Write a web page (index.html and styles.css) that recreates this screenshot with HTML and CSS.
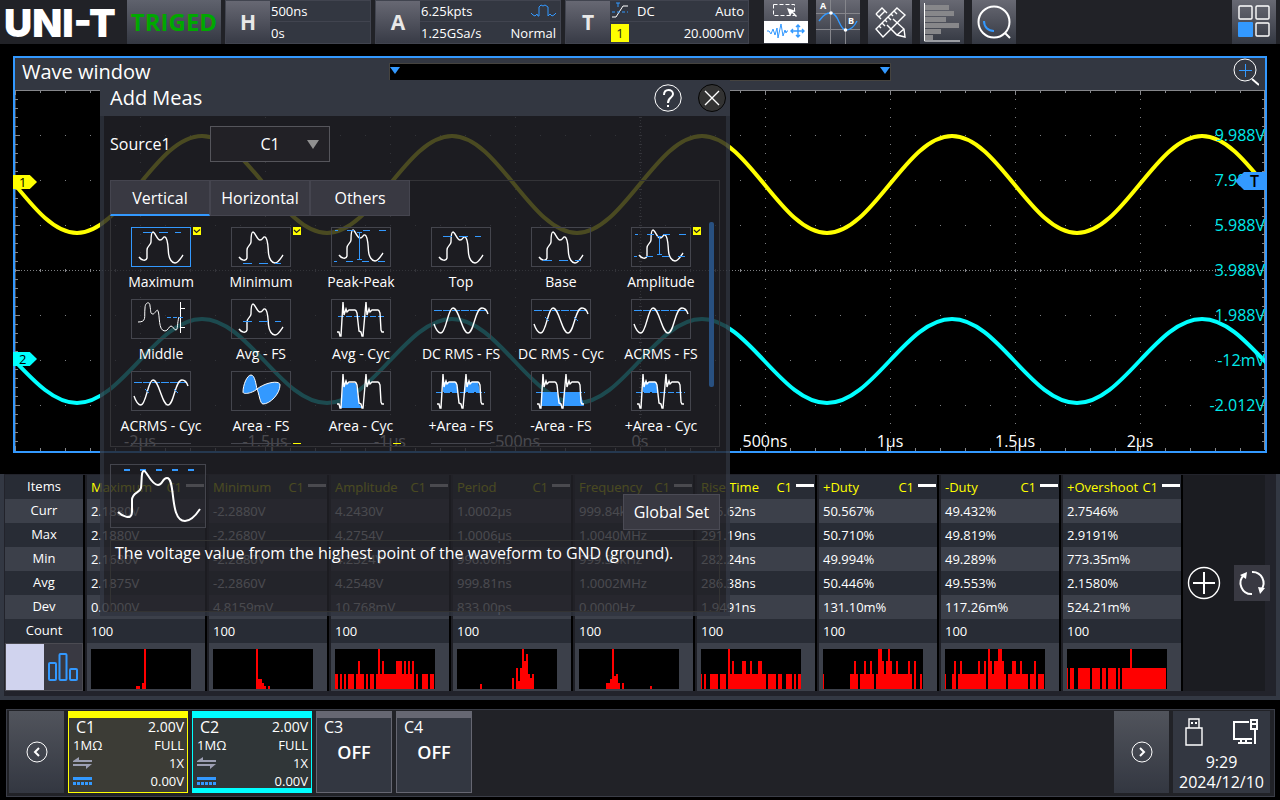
FILE: index.html
```
<!DOCTYPE html>
<html lang="en">

<head>
    <meta charset="UTF-8" />
    <title>UNI-T</title>
    <link rel="stylesheet" href="styles.css">
</head>

<body>
    <!-- shared waveform shapes -->
    <svg class="defs" aria-hidden="true">
        <symbol id="wave" viewBox="0 0 60 40">
            <path class="w" d="M8 30C10 33 15 35 16 31V23C16 19 20 18 20 15C20 8 21 5 22 5C24 5 26 13 29 13C32 13 32 9 34 10C37 11 37 20 37.5 26C38 32 41 36 44 36C47 36 50 31 52 28" />
        </symbol>
        <symbol id="cyc" viewBox="0 0 60 40">
            <path class="w" d="M6 33H8L9 37H10L12 3L13 16L15 10L16 13L18 11H24Q25 11 26 14L28 32L30 33L31 37H32L35 3L36 16L38 10L39 13L41 11H47Q48 11 49 14L50 31L51 33H53" />
        </symbol>
        <symbol id="sine" viewBox="0 0 60 40">
            <path class="w" d="M3 25C5 31 7 34 10 34C15 34 17 9 22 9C28 9 31 34 37 34C43 34 44 9 51 9C54 9 56 12 57 15" />
        </symbol>
        <symbol id="check" viewBox="0 0 8 8">
            <path fill="#ff0" d="M0 0h8v8H0z" />
            <path fill="none" stroke="#222" stroke-width="1.2" d="M1 3L3.5 5.5L7 2.5" />
        </symbol>
    </svg>

    <header class="topbar">
        <div class="logo">UNI-T</div>
        <div class="status">TRIGED</div>
        <button class="group group-h" type="button">
            <b>H</b>
            <span class="cells"><span class="line"><span>500ns</span></span><span class="line"><span>0s</span></span></span>
        </button>
        <button class="group group-a" type="button">
            <b>A</b>
            <span class="cells">
                <span class="line"><span>6.25kpts</span>
                    <svg width="25" height="14" viewBox="0 0 25 14"><path class="b" d="M0 9l2 2 2 1 2-2 1 2h1V3l2-2 2 1 2-1 3 2v9l2-2 2 2 2-1 2-2" /></svg>
                </span>
                <span class="line"><span>1.25GSa/s</span><span>Normal</span></span>
            </span>
        </button>
        <button class="group group-t" type="button">
            <b>T</b>
            <span class="cells">
                <span class="line">
                    <svg width="18" height="18" viewBox="0 0 18 18"><path class="w" d="M1 15h4L12 4h5" /><path class="b" d="M1 10h16" stroke-dasharray="3 2" /><path class="b" d="M5 1h4M7 1v4" /></svg>
                    <span class="grow">DC</span><span>Auto</span>
                </span>
                <span class="line"><span class="chan">1</span><span>20.000mV</span></span>
            </span>
        </button>
        <nav class="tools">
            <button class="tool split" type="button" aria-label="Select area">
                <svg width="44" height="44" viewBox="0 0 44 44">
                    <path fill="#fff" d="M0 21h44v22H0z" />
                    <path class="w" d="M9.500 4.500h21v11h-21z" stroke-dasharray="4 2" />
                    <path fill="#fff" d="M23 8l9 3-3 1 4 4-1 1-4-4-2 3z" />
                    <path class="b" d="M3 31h2l2 3 2-5 2 6 2-7 1 10 3-14 2 12 2-6 1 3 1-2h1" />
                    <path class="b bold" d="M28 31h12M34 25v12M29 29l-2 2 2 2M38 29l2 2-2 2M32 27l2-2 2 2M32 35l2 2 2-2" />
                </svg>
            </button>
            <button class="tool" type="button" aria-label="Cursor">
                <svg width="44" height="44" viewBox="0 0 44 44">
                    <path stroke="#85868c" d="M14.500 0v44M29.500 0v44M0 13.500h44M0 29.500h44" />
                    <path class="b bold" d="M3 21C8 14 11 13 15 13C23 13 23 30 30 30C35 30 38 27 41 21" />
                    <circle cx="15" cy="13" r="1.800" fill="#fff" /><circle cx="29.500" cy="30" r="1.800" fill="#fff" />
                    <text x="4" y="9" class="tiny">A</text><text x="32" y="24" class="tiny">B</text>
                </svg>
            </button>
            <button class="tool" type="button" aria-label="Measure">
                <svg width="44" height="44" viewBox="0 0 44 44">
                    <g class="w bold">
                        <path d="M8 14L14 8L19 13M25 19L36 29L37 37L29 35L19 25M13 19L8 14M11 17L17 11M29 35L36 29" />
                        <path d="M29 8L37 15L15 37L8 29zM26 11l3 3M23 14l2 2M20 17l3 3M17 20l2 2M14 23l3 3M11 26l2 2" />
                    </g>
                </svg>
            </button>
            <button class="tool" type="button" aria-label="Statistics">
                <svg width="44" height="44" viewBox="0 0 44 44">
                    <path fill="#87878a" d="M5 5h24v5H5zM5 11h29v5H5zM5 17h21v5H5zM5 23h34v5H5zM5 29h16v5H5zM5 35h8v5H5z" />
                    <path class="w" d="M4.500 3v38H40" />
                </svg>
            </button>
            <button class="tool" type="button" aria-label="Search">
                <svg width="44" height="44" viewBox="0 0 44 44">
                    <circle class="w thick" cx="22" cy="22" r="15.500" /><path class="w thick" d="M33 33l5 5" />
                    <path class="b thick" d="M12 21C12 27 16 31 22 31" />
                </svg>
            </button>
        </nav>
        <button class="tool" type="button" aria-label="Menu">
            <svg width="44" height="44" viewBox="0 0 44 44">
                <g class="w bold"><rect x="7" y="6" width="13" height="13" rx="1" /><rect x="24" y="6" width="13" height="13" rx="1" /><rect x="24" y="23" width="13" height="13" rx="1" /></g>
                <rect x="6" y="22" width="15" height="15" rx="1" fill="#39f" />
            </svg>
        </button>
    </header>

    <main class="wave-window">
        <div class="wave-head">
            <h1>Wave window</h1>
            <div class="navigator">
                <svg width="10" height="7" viewBox="0 0 10 7"><path fill="#39f" d="M0 0h10L5 7z" /></svg>
                <svg width="10" height="7" viewBox="0 0 10 7"><path fill="#39f" d="M0 0h10L5 7z" /></svg>
            </div>
            <button class="plain zoom" type="button" aria-label="Zoom">
                <svg width="26" height="28" viewBox="0 0 26 28"><circle class="w" cx="12" cy="12" r="11" /><path class="w thick" d="M19 21l7 6" /><path class="b" d="M12.500 6v13M6 12.500h13" /></svg>
            </button>
        </div>
        <div class="plot">
            <svg class="graph" viewBox="0 0 1250 361" preserveAspectRatio="none">
                <g class="dots">
                    <path stroke-dasharray="1 8" d="M125.500 0v360M250.500 0v360M375.500 0v360M500.500 0v360M750.500 0v360M875.500 0v360M1000.500 0v360M1125.500 0v360" />
                    <path stroke-dasharray="1 24" d="M0 45.500h1250M0 90.500h1250M0 135.500h1250M0 225.500h1250M0 270.500h1250M0 315.500h1250" />
                    <path stroke-dasharray="1 2" d="M0 180.500h1250M625.500 0v360" />
                </g>
                <g class="ticks">
                    <path d="M0 .5h1250M0 0v360M1249.500 0v360" />
                    <path stroke-width="3" stroke-dasharray="1 24" d="M0 1.500h1250M0 359.500h1250M0 180.500h1250" />
                    <path stroke-width="5" stroke-dasharray="1 124" d="M0 2.500h1250M0 358.500h1250" />
                    <path stroke-width="3" stroke-dasharray="1 8" d="M1.500 0v360M1248.500 0v360M625.500 0v360" />
                    <path stroke-width="5" stroke-dasharray="1 44" d="M2.500 0v360M1247.500 0v360" />
                </g>
                <path class="trace c1" d="M-63 46C-17 46 17 143 62 143S141 46 187 46S266 143 312 143S391 46 437 46S516 143 562 143S641 46 687 46S766 143 812 143S891 46 937 46S1016 143 1062 143S1141 46 1187 46S1266 143 1312 143" />
                <path class="trace c2" d="M-63 229C-17 229 17 313 62 313S141 229 187 229S266 313 312 313S391 229 437 229S516 313 562 313S641 229 687 229S766 313 812 313S891 229 937 229S1016 313 1062 313S1141 229 1187 229S1266 313 1312 313" />
            </svg>
            <div class="volts">
                <span>9.988V</span><span>7.988V</span><span>5.988V</span><span>3.988V</span><span>1.988V</span><span>-12mV</span><span>-2.012V</span>
            </div>
            <div class="times">
                <span>-2µs</span><span>-1.5µs</span><span>-1µs</span><span>-500ns</span><span>0s</span><span>500ns</span><span>1µs</span><span>1.5µs</span><span>2µs</span>
            </div>
            <span class="marker m1">1</span>
            <span class="marker m2">2</span>
            <span class="marker mt">T</span>
        </div>
    </main>

    <section class="stats">
        <table>
            <tr>
                <th>Items</th>
                <th><span class="item">Maximum<i>C1</i></span></th>
                <th><span class="item">Minimum<i>C1</i></span></th>
                <th><span class="item">Amplitude<i>C1</i></span></th>
                <th><span class="item">Period<i>C1</i></span></th>
                <th><span class="item">Frequency<i>C1</i></span></th>
                <th><span class="item">Rise Time<i>C1</i></span></th>
                <th><span class="item">+Duty<i>C1</i></span></th>
                <th><span class="item">-Duty<i>C1</i></span></th>
                <th><span class="item">+Overshoot<i>C1</i></span></th>
            </tr>
            <tr><th>Curr</th><td>2.1880V</td><td>-2.2880V</td><td>4.2430V</td><td>1.0002µs</td><td>999.84kHz</td><td>286.62ns</td><td>50.567%</td><td>49.432%</td><td>2.7546%</td></tr>
            <tr><th>Max</th><td>2.1880V</td><td>-2.2680V</td><td>4.2754V</td><td>1.0006µs</td><td>1.0040MHz</td><td>291.19ns</td><td>50.710%</td><td>49.819%</td><td>2.9191%</td></tr>
            <tr><th>Min</th><td>2.1680V</td><td>-2.2880V</td><td>4.2324V</td><td>996.00ns</td><td>999.36kHz</td><td>282.24ns</td><td>49.994%</td><td>49.289%</td><td>773.35m%</td></tr>
            <tr><th>Avg</th><td>2.1875V</td><td>-2.2860V</td><td>4.2548V</td><td>999.81ns</td><td>1.0002MHz</td><td>286.38ns</td><td>50.446%</td><td>49.553%</td><td>2.1580%</td></tr>
            <tr><th>Dev</th><td>0.0000V</td><td>4.8159mV</td><td>10.768mV</td><td>833.00ps</td><td>0.0000Hz</td><td>1.9491ns</td><td>131.10m%</td><td>117.26m%</td><td>524.21m%</td></tr>
            <tr><th>Count</th><td>100</td><td>100</td><td>100</td><td>100</td><td>100</td><td>100</td><td>100</td><td>100</td><td>100</td></tr>
            <tr class="hists">
                <th>
                    <button class="toggle" type="button" aria-label="Histogram">
                        <svg width="30" height="28" viewBox="0 0 30 28"><g class="b thick"><rect x="1" y="10" width="7" height="17" rx="1" /><rect x="11.500" y="1" width="7" height="26" rx="1" /><rect x="22" y="16" width="7" height="11" rx="1" /></g></svg>
                    </button>
                </th>
                <td><svg viewBox="0 0 100 40"><path d="M45 40v-3h4v3M51 40v-6h2v6M53 40V0h2v40" /></svg></td>
                <td><svg viewBox="0 0 100 40"><path d="M43 40V0h2v40M45 40V30h4v10M49 40v-6h2v6M51 40v-3h2v3M55 40v-3h2v3" /></svg></td>
                <td><svg viewBox="0 0 100 40"><path d="M0 40V25h3v15M5 40V25h2v15M9 40V25h2v15M13 40V25h6v15M21 40V25h8v15M31 40V25h2v15M35 40V25h4v15M41 40V25h38v15M81 40V25h2v15M87 40V25h6v15M95 40V25h4v15M23 25V12h2v13M43 25V0h2v25M47 25V12h2v13M61 25V12h6v13M69 25V12h2v13M73 25V12h2v13M77 25V12h2v13" /></svg></td>
                <td><svg viewBox="0 0 100 40"><path d="M23 40v-5h2v5M55 40V29h2v11M59 40V19h2v21M61 40v-8h2v8M63 40V19h2v21M65 40V0h2v40M67 40V12h2v28M69 40V5h2v35M71 40V25h2v15M73 40V29h2v11M75 40V25h2v15" /></svg></td>
                <td><svg viewBox="0 0 100 40"><path d="M27 40v-6h4v6M31 40V30h2v10M33 40V0h2v40M35 40V27h2v13M37 40V25h2v15M39 40v-6h2v6M43 40v-6h2v6M71 40v-3h2v3" /></svg></td>
                <td><svg viewBox="0 0 100 40"><path d="M0 40V25h1v15M3 40V25h2v15M9 40V25h8v15M19 40V25h6v15M27 40V25h38v15M67 40V25h8v15M77 40V25h4v15M85 40V25h6v15M93 40V25h2v15M97 40V25h3v15M27 25V0h2v25M31 25V12h2v13M41 25V12h4v13M49 25V12h2v13M57 25V12h4v13" /></svg></td>
                <td><svg viewBox="0 0 100 40"><path d="M0 40V25h1v15M27 40V25h8v15M37 40V25h14v15M53 40V25h36v15M91 40V12h2v28M97 40V25h2v15M31 25V12h2v13M41 25V12h2v13M47 25V12h2v13M55 25V0h4v25M59 25V12h2v13M63 25V12h6v13M65 12V0h2v12M73 25V12h2v13M85 25V12h2v13" /></svg></td>
                <td><svg viewBox="0 0 100 40"><path d="M0 40V25h1v15M7 40V25h4v15M13 40V25h28v15M43 40V25h18v15M63 40V25h20v15M85 40V25h6v15M93 40V25h6v15M9 25V12h2v13M15 25V12h2v13M33 25V12h2v13M39 25V12h2v13M43 25V0h2v25M45 25V12h2v13M49 25V12h10v13M53 12V0h4v12M67 25V12h4v13M75 25V12h2v13M89 25V12h2v13" /></svg></td>
                <td><svg viewBox="0 0 100 40"><path d="M0 40V19h1v21M3 40V19h4v21M11 40V19h12v21M25 40V19h8v21M35 40V19h4v21M41 40V19h8v21M51 40V19h2v21M55 40V19h44v21M63 19V0h2v19" /></svg></td>
            </tr>
        </table>
        <div class="stats-actions">
            <button class="plain" type="button" aria-label="Add">
                <svg width="34" height="34" viewBox="0 0 34 34"><circle class="w bold" cx="17" cy="17" r="15.500" /><path class="w thick" d="M17 6v22M6 17h22" /></svg>
            </button>
            <button class="reset" type="button" aria-label="Reset">
                <svg width="36" height="36" viewBox="0 0 36 36"><path class="w thick" d="M18 29A11 11 0 0 1 10 10M18 7A11 11 0 0 1 27 25" /><path fill="#fff" d="M6 10l7-3-1 7zM24 22l7 1-5 6z" /></svg>
            </button>
        </div>
    </section>

    <footer class="channels">
        <button class="pager" type="button" aria-label="Previous">
            <svg width="22" height="22" viewBox="0 0 22 22"><circle class="w" cx="11" cy="11" r="10" /><path class="w thick" d="M13 7l-4 4 4 4" /></svg>
        </button>
        <button class="channel on yellow" type="button">
            <span class="row name"><b>C1</b><span>2.00V</span></span>
            <span class="row"><span>1MΩ</span><span>FULL</span></span>
            <span class="row"><svg width="19" height="12" viewBox="0 0 19 12"><path fill="#9c9fb3" d="M0 4L6 0v3h13v2H0zM0 7h19l-6 5V9H0z" /></svg><span>1X</span></span>
            <span class="row"><svg width="19" height="8" viewBox="0 0 19 8"><path fill="#39f" d="M0 0h19v3H0zM0 5h3v3H0zM4 5h3v3H4zM8 5h3v3H8zM12 5h3v3h-3zM16 5h3v3h-3z" /></svg><span>0.00V</span></span>
        </button>
        <button class="channel on cyan" type="button">
            <span class="row name"><b>C2</b><span>2.00V</span></span>
            <span class="row"><span>1MΩ</span><span>FULL</span></span>
            <span class="row"><svg width="19" height="12" viewBox="0 0 19 12"><path fill="#9c9fb3" d="M0 4L6 0v3h13v2H0zM0 7h19l-6 5V9H0z" /></svg><span>1X</span></span>
            <span class="row"><svg width="19" height="8" viewBox="0 0 19 8"><path fill="#39f" d="M0 0h19v3H0zM0 5h3v3H0zM4 5h3v3H4zM8 5h3v3H8zM12 5h3v3h-3zM16 5h3v3h-3z" /></svg><span>0.00V</span></span>
        </button>
        <button class="channel" type="button"><span class="row name"><b>C3</b></span><strong>OFF</strong></button>
        <button class="channel" type="button"><span class="row name"><b>C4</b></span><strong>OFF</strong></button>
        <button class="pager next" type="button" aria-label="Next">
            <svg width="22" height="22" viewBox="0 0 22 22"><circle class="w" cx="11" cy="11" r="10" /><path class="w thick" d="M9 7l4 4-4 4" /></svg>
        </button>
        <div class="clock">
            <div class="devices">
                <svg width="18" height="28" viewBox="0 0 18 28"><path class="w bold" d="M1 10h16v17H1zM4 10V1h10v9" /><path fill="#fff" d="M6 4h2v2H6zM10 4h2v2h-2z" /></svg>
                <svg width="26" height="26" viewBox="0 0 26 26"><path class="w thick" d="M16 3H1v17h18M8 20v3M13 20v3M5 24h14M22 10v15" /><path fill="#fff" d="M17 0h8v11h-8zM19 2v2h4V2z" fill-rule="evenodd" /><path fill="#333741" d="M19 6h4v3h-4z" /></svg>
            </div>
            <span>9:29</span>
            <span>2024/12/10</span>
        </div>
    </footer>

    <section class="dialog" role="dialog" aria-label="Add Meas">
        <div class="dialog-head">
            <h2>Add Meas</h2>
            <button class="plain" type="button" aria-label="Help">
                <svg width="28" height="28" viewBox="0 0 28 28"><circle class="w" cx="14" cy="14" r="13.200" /><path class="w thick" d="M10 11C10 4 19 5 19 10C19 14 14 13 14 19M14 21v2" /></svg>
            </button>
            <button class="plain" type="button" aria-label="Close">
                <svg width="28" height="28" viewBox="0 0 28 28"><circle cx="14" cy="14" r="13.500" fill="#333" stroke="#050505" /><path class="w bold" d="M7 7l14 14M21 7L7 21" /></svg>
            </button>
        </div>
        <div class="dialog-body">
            <div class="source">
                <label for="source">Source1</label>
                <div class="select-wrap">
                    <select id="source">
                        <option>C1</option>
                        <option>C2</option>
                    </select>
                    <svg width="12" height="9" viewBox="0 0 12 9"><path fill="#909090" d="M0 0h12L6 9z" /></svg>
                </div>
            </div>
            <div class="meas">
                <div class="tabs">
                    <button class="active" type="button">Vertical</button>
                    <button type="button">Horizontal</button>
                    <button type="button">Others</button>
                </div>
                <div class="list">
                    <button class="selected" type="button">
                        <svg class="icon" viewBox="0 0 60 40"><use href="#wave" /><path class="b" d="M12 5.500h9M28 5.500h9M44 5.500h6" /></svg>
                        <svg class="mark"><use href="#check" /></svg>Maximum
                    </button>
                    <button type="button">
                        <svg class="icon" viewBox="0 0 60 40"><use href="#wave" /><path class="b" d="M12 36.500h9M28 36.500h9M44 36.500h6" /></svg>
                        <svg class="mark"><use href="#check" /></svg>Minimum
                    </button>
                    <button type="button">
                        <svg class="icon" viewBox="0 0 60 40"><use href="#wave" y="-2" /><path class="b" d="M4 3.500h3M16 3.500h7M32 3.500h7M48 3.500h7M3 34.500h3M15 34.500h7M31 34.500h7M47 34.500h7M28.500 5v27M26 5.500h5M26 32.500h5" /></svg>Peak-Peak
                    </button>
                    <button type="button">
                        <svg class="icon" viewBox="0 0 60 40"><use href="#wave" /><path class="b" d="M12 9.500h9M28 9.500h9M44 9.500h6" /></svg>Top
                    </button>
                    <button type="button">
                        <svg class="icon" viewBox="0 0 60 40"><use href="#wave" /><path class="b" d="M12 33.500h9M28 33.500h9M44 33.500h6" /></svg>Base
                    </button>
                    <button type="button">
                        <svg class="icon" viewBox="0 0 60 40"><use href="#wave" y="-2" /><path class="b" d="M4 7.500h3M16 7.500h7M32 7.500h7M48 7.500h7M3 29.500h3M15 29.500h7M31 29.500h7M47 29.500h7M28.500 9v18M26 9.500h5M26 27.500h5" /></svg>
                        <svg class="mark"><use href="#check" /></svg>Amplitude
                    </button>
                    <button type="button">
                        <svg class="icon" viewBox="0 0 60 40"><path class="w" d="M7 23C16 23 13 18 14 9C14 3 19 2 19 7C20 12 19 15 22 15C24 15 26 9 27 12C29 16 27 32 34 32C37 32 38 27 40 27C42 27 43 31 45 31C47 31 46 24 48 18M49.500 3v31M49 9.500h5M49 28.500h5" /><path class="b" d="M36 18.500h18" stroke-dasharray="4 2" /></svg>Middle
                    </button>
                    <button type="button">
                        <svg class="icon" viewBox="0 0 60 40"><use href="#wave" /><path class="b" d="M12 22.500h9M28 22.500h9M44 22.500h6" /></svg>Avg - FS
                    </button>
                    <button type="button">
                        <svg class="icon" viewBox="0 0 60 40"><path class="b" d="M7 17.500h46" stroke-dasharray="6 2" /><use href="#cyc" /></svg>Avg - Cyc
                    </button>
                    <button type="button">
                        <svg class="icon" viewBox="0 0 60 40"><path class="b" d="M3 11.500h53" stroke-dasharray="8 1" /><use href="#sine" /></svg>DC RMS - FS
                    </button>
                    <button type="button">
                        <svg class="icon" viewBox="0 0 60 40"><path class="b" d="M3 11.500h53" stroke-dasharray="8 1" /><use href="#sine" /><path class="b" d="M14 18l4 4M43 18l4 4" /></svg>DC RMS - Cyc
                    </button>
                    <button type="button">
                        <svg class="icon" viewBox="0 0 60 40"><path class="b" d="M3 11.500h53" stroke-dasharray="8 1" /><use href="#sine" /></svg>ACRMS - FS
                    </button>
                    <button type="button">
                        <svg class="icon" viewBox="0 0 60 40"><path class="b" d="M3 11.500h53" stroke-dasharray="8 1" /><use href="#sine" /><path class="b" d="M14 18l4 4M43 18l4 4" /></svg>ACRMS - Cyc
                    </button>
                    <button type="button">
                        <svg class="icon" viewBox="0 0 60 40"><path class="w fill" d="M26 18C22 22 12 24 12 21C12 14 16 4 20 4C24 4 25 14 26 18C35 11 49 9 49 14C49 23 39 33 32 33C29 33 28 22 26 18z" /></svg>Area - FS
                    </button>
                    <button type="button">
                        <svg class="icon" viewBox="0 0 60 40"><path fill="#39f" d="M10 37L12 12h13l3 21 3 4z" /><use href="#cyc" /></svg>Area - Cyc
                    </button>
                    <button type="button">
                        <svg class="icon" viewBox="0 0 60 40"><path fill="#39f" d="M12 21V11h13l2 10zM34 21V11h13l2 10z" /><path class="b" d="M5 21.500h49" stroke-dasharray="6 2" /><use href="#cyc" /></svg>+Area - FS
                    </button>
                    <button type="button">
                        <svg class="icon" viewBox="0 0 60 40"><path fill="#39f" d="M11 21h15l5 14H10zM33 21h16l4 14H32z" /><path class="b" d="M5 21.500h49" stroke-dasharray="6 2" /><use href="#cyc" /></svg>-Area - FS
                    </button>
                    <button type="button">
                        <svg class="icon" viewBox="0 0 60 40"><path fill="#39f" d="M12 21V11h13l2 10z" /><path class="b" d="M5 21.500h49" stroke-dasharray="6 2" /><use href="#cyc" /></svg>+Area - Cyc
                    </button>
                    <button type="button" aria-label="-Area - Cyc"><svg class="icon" viewBox="0 0 60 40"></svg></button>
                    <button type="button" aria-label="Overshoot"><svg class="icon" viewBox="0 0 60 40"></svg><svg class="mark"><use href="#check" /></svg></button>
                    <button type="button" aria-label="Preshoot"><svg class="icon" viewBox="0 0 60 40"></svg><svg class="mark"><use href="#check" /></svg></button>
                    <button type="button" aria-label="Upper"><svg class="icon" viewBox="0 0 60 40"></svg></button>
                    <button type="button" aria-label="Lower"><svg class="icon" viewBox="0 0 60 40"></svg></button>
                </div>
                <span class="scroll"></span>
            </div>
            <div class="preview">
                <svg width="96" height="64" viewBox="0 0 96 64"><path class="b thick" d="M14 6h70" stroke-dasharray="6 10" /><path class="w thick" d="M8 48C12 52 22 57 22 48V36C22 28 30 29 31 24C32 16 31 7 34 7C37 7 41 21 48 21C53 21 52 14 57 14C66 14 59 57 75 57C81 57 86 51 90 45" /></svg>
                <button class="global" type="button">Global Set</button>
            </div>
            <p class="hint">The voltage value from the highest point of the waveform to GND (ground).</p>
        </div>
    </section>
</body>

</html>
```
FILE: styles.css
```
* {
    box-sizing: border-box;
}

body {
    margin: 0;
    min-height: 100vh;
    display: flex;
    flex-direction: column;
    position: relative;
    background: #000;
    color: #fff;
    font-family: "Open Sans", "Noto Sans", sans-serif;
    font-size: 13px;
    line-height: 18px;
}

button,
select {
    font: inherit;
    color: inherit;
    border: none;
    padding: 0;
    margin: 0;
    background: none;
}

svg {
    display: block;
    flex: none;
}

.defs {
    position: absolute;
    width: 0;
    height: 0;
}

.w,
.b {
    fill: none;
    stroke: #fff;
    stroke-width: 1;
}

.b {
    stroke: #3399ff;
}

.bold,
.defs .w {
    stroke-width: 1.4;
}

.thick {
    stroke-width: 2;
}

.fill {
    fill: #3399ff;
}

/* top bar */
.topbar {
    display: flex;
    height: 44px;
    background: #212227;
    padding-right: 4px;
}

.logo {
    width: 127px;
    padding-left: 4px;
    font-family: Inter, sans-serif;
    font-size: 39px;
    font-weight: 900;
    line-height: 45px;
}

.status {
    width: 94px;
    margin-right: 4px;
    text-align: center;
    color: #00a800;
    font-size: 24px;
    font-weight: 700;
    line-height: 44px;
    background: linear-gradient(#5f626d, #343842);
}

.group {
    display: flex;
    margin-right: 4px;
    border: 1px solid #41444f;
    background: #333741;
    text-align: left;
}

.group-h {
    width: 146px;
}

.group-a {
    width: 186px;
}

.group-t {
    width: 184px;
}

.group b {
    width: 44px;
    color: #e8e8e8;
    font-size: 21px;
    line-height: 42px;
    text-align: center;
    background: linear-gradient(#676873, #383b46);
}

.cells {
    flex: 1;
}

.line {
    display: flex;
    align-items: center;
    justify-content: space-between;
    height: 21px;
    padding: 0 4px 0 1px;
    gap: 8px;
}

.line:first-child {
    border-bottom: 1px solid #41444f;
}

.grow {
    flex: 1;
}

.chan {
    width: 18px;
    background: #ffff00;
    color: #222;
    text-align: center;
}

.tools {
    display: flex;
    flex: 1;
    gap: 8px;
    margin-left: 11px;
}

.tool {
    width: 44px;
    background: linear-gradient(#686973, #343842);
}

.tiny {
    fill: #fff;
    font-size: 9px;
    font-weight: 700;
}

/* wave window */
.wave-window {
    margin: 12px 13px 0 13px;
    border: 2px solid #3399ff;
}

.wave-head {
    display: grid;
    grid-template-columns: 1fr 502px 1fr;
    align-items: center;
    height: 32px;
    padding-bottom: 4px;
    background: #333741;
}

.wave-head h1,
.dialog-head h2 {
    margin: 0;
    font-size: 20px;
    font-weight: 400;
    line-height: 28px;
}

.wave-head h1 {
    padding-left: 7px;
}

.navigator {
    display: flex;
    justify-content: space-between;
    height: 18px;
    padding-top: 3px;
    border: 1px solid #45433f;
    background: #000;
}

.zoom {
    justify-self: end;
    margin-right: 6px;
}

.plot {
    position: relative;
}

.graph {
    width: 100%;
    height: 361px;
}

.dots {
    stroke: #7d7f82;
}

.ticks {
    stroke: #85868a;
}

.trace {
    fill: none;
    stroke-width: 4;
}

.c1 {
    stroke: #ffff00;
}

.c2 {
    stroke: #00ffff;
}

.volts {
    position: absolute;
    top: 22px;
    right: 0;
    display: grid;
    grid-auto-rows: 45px;
    align-items: center;
    color: #00eaea;
    font-size: 16px;
    text-align: right;
}

.times {
    position: absolute;
    left: 0;
    right: 0;
    bottom: 1px;
    display: grid;
    grid-template-columns: repeat(9, 1fr);
    padding: 0 5%;
    font-size: 16px;
    text-align: center;
}

.marker {
    position: absolute;
    left: -2px;
    width: 24px;
    height: 14px;
    padding-left: 6px;
    color: #000;
    line-height: 14px;
    clip-path: polygon(0 0, 70% 0, 100% 50%, 70% 100%, 0 100%);
}

.m1 {
    top: 85px;
    background: #ffff00;
}

.m2 {
    top: 262px;
    background: #00ffff;
}

.mt {
    top: 82px;
    left: auto;
    right: 0;
    width: 30px;
    height: 18px;
    padding-left: 15px;
    font-size: 16px;
    font-weight: 600;
    line-height: 18px;
    background: #3399ff;
    clip-path: polygon(0 50%, 30% 0, 100% 0, 100% 100%, 30% 100%);
}

/* statistics table */
.stats {
    display: flex;
    margin-top: 21px;
    padding: 1px 11px 5px 1px;
    border: solid #333843;
    border-width: 0 4px 4px 4px;
    background: #22232b;
}

table {
    border-spacing: 0;
    table-layout: fixed;
    width: 1178px;
    flex: none;
}

th,
td {
    height: 24px;
    padding: 0 0 0 4px;
    border-left: 2px solid #1e1f25;
    border-right: 2px solid #000;
    background: #282c35;
    font-weight: 400;
    text-align: left;
}

th:first-child {
    width: 80px;
    padding: 0 0 2px;
    border-left: none;
    text-align: center;
}

tr:nth-child(even) th,
tr:nth-child(even) td {
    background: #3c404a;
}

.item {
    display: flex;
    align-items: center;
    color: #ffff00;
}

.item i {
    display: flex;
    gap: 4px;
    margin-left: auto;
    margin-right: 1px;
    font-style: normal;
}

.item i::after {
    content: "";
    width: 18px;
    height: 3px;
    margin-top: 6px;
    background: #fff;
}

.hists td {
    height: 48px;
    padding-top: 4px;
}

.hists th:first-child {
    height: 48px;
    padding: 0;
}

.hists td svg {
    width: 100px;
    height: 40px;
    background: #000;
    fill: #ff0000;
}

.toggle {
    display: flex;
    align-items: center;
    justify-content: flex-end;
    width: 78px;
    height: 48px;
    padding-right: 4px;
    border: 1px solid #4b4b52;
    background: linear-gradient(to right, #d0d3ee 38px, #393942 38px);
}

.stats-actions {
    flex: 1;
    display: flex;
    align-items: center;
    justify-content: space-between;
    padding-left: 4px;
    background: #1b1c21;
}

.reset {
    margin-right: -5px;
    background: #393942;
}

/* channel bar */
.channels {
    display: flex;
    gap: 4px;
    height: 88px;
    margin: 9px 5px 3px 6px;
    padding: 1px 4px 2px 2px;
    border: 1px solid #3b3e48;
    background: #212227;
}

.pager {
    display: flex;
    align-items: center;
    justify-content: center;
    width: 55px;
    height: 82px;
    background: linear-gradient(#51545c, #333741);
}

.next {
    margin-left: auto;
}

.channel {
    display: flex;
    flex-direction: column;
    width: 76px;
    height: 82px;
    border: 1px solid #666772;
    border-top-width: 7px;
    background: #333741;
}

.channel.on {
    width: 120px;
}

.channel.yellow {
    border-color: #ffff00;
    background: #3c3c36;
}

.channel.cyan {
    border-color: #00ffff;
    border-bottom-width: 5px;
    background: #303638;
}

.row {
    display: flex;
    align-items: center;
    justify-content: space-between;
    width: 100%;
    height: 18px;
    padding: 0 3px 0 4px;
}

.row b {
    padding-left: 3px;
    font-size: 16px;
    font-weight: 400;
}

.name span {
    font-size: 14px;
}

.channel strong {
    align-self: center;
    font-size: 18px;
    font-weight: 600;
    line-height: 32px;
}

.clock {
    display: flex;
    flex-direction: column;
    align-items: center;
    width: 97px;
    height: 82px;
    background: #333741;
    font-size: 16px;
    line-height: 20px;
}

.devices {
    display: flex;
    align-items: center;
    justify-content: space-between;
    width: 74px;
    padding: 7px 0 6px;
}

/* measurement dialog */
.dialog {
    position: absolute;
    left: 100px;
    top: 80px;
    width: 630px;
    font-size: 16px;
}

.plain {
    display: block;
}

.dialog-head {
    display: flex;
    align-items: center;
    gap: 16px;
    height: 36px;
    padding: 0 4px 0 10px;
    background: #333741;
}

.dialog-head h2 {
    flex: 1;
}

.dialog-body {
    padding: 10px 6px 0;
    border: solid rgba(48, 53, 64, 0.85);
    border-width: 0 4px 4px;
    background: rgba(34, 34, 40, 0.82) padding-box;
}

.source {
    display: flex;
    align-items: center;
    height: 36px;
    margin-bottom: 18px;
}

.source label {
    width: 100px;
}

.select-wrap {
    position: relative;
    width: 120px;
}

.select-wrap select {
    appearance: none;
    width: 120px;
    height: 36px;
    border: 1px solid #55555b;
    background: #222126;
    text-align: center;
    text-align-last: center;
}

.select-wrap svg {
    position: absolute;
    right: 11px;
    top: 14px;
    pointer-events: none;
}

.meas {
    position: relative;
    height: 267px;
    margin-bottom: 17px;
    border: 1px solid #333337;
}

.tabs {
    display: flex;
    height: 36px;
    margin: -1px 0 0 -1px;
}

.tabs button {
    width: 100px;
    border: 1px solid #45454f;
    background: #393942;
}

.tabs .active {
    border-bottom: 2px solid #3399ff;
}

.list {
    display: grid;
    grid-template-columns: repeat(6, 100px);
    grid-auto-rows: 72px;
    height: 228px;
    padding-top: 11px;
    overflow: hidden;
    font-size: 14px;
}

.list button {
    position: relative;
    display: flex;
    flex-direction: column;
    align-items: center;
    gap: 6px;
    white-space: nowrap;
}

.icon {
    width: 60px;
    height: 40px;
    outline: 1px solid #44454d;
    outline-offset: -1px;
}

.selected .icon {
    outline-color: #3399ff;
}

.mark {
    position: absolute;
    top: 0;
    right: 10px;
    width: 8px;
    height: 8px;
}

.scroll {
    position: absolute;
    top: 41px;
    right: 5px;
    width: 5px;
    height: 165px;
    border-radius: 2px;
    background: #285080;
}

.preview {
    display: flex;
    justify-content: space-between;
    height: 66px;
    margin-bottom: 10px;
}

.preview svg {
    outline: 1px solid #44454d;
    outline-offset: -1px;
}

.global {
    align-self: flex-end;
    width: 97px;
    height: 36px;
    border: 1px solid #4b4b55;
    background: #393942;
}

.hint {
    height: 72px;
    margin: 0;
    padding: 3px 4px;
    border: 1px solid #333333;
}
```
